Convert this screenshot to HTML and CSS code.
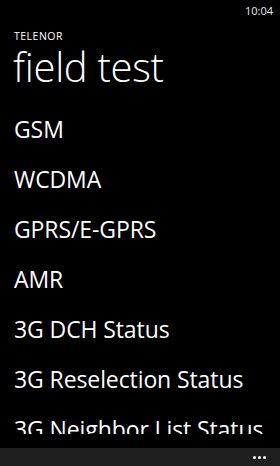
FILE: index.html
```html
<!DOCTYPE html>
<html lang="en">
<head>
  <meta charset="UTF-8" />
  <meta name="viewport" content="width=device-width, initial-scale=1.0"/>
  <title>field test</title>
  <link rel="stylesheet" href="styles.css">
</head>
<body>
  <div class="phone">
    <div class="status-bar">
      <span class="clock">10:04</span>
    </div>

    <header class="page-header">
      <p class="app-name">TELENOR</p>
      <h1 class="page-title">field test</h1>
    </header>

    <main class="list-wrap">
      <ul class="menu-list">
        <li>GSM</li>
        <li>WCDMA</li>
        <li>GPRS/E-GPRS</li>
        <li>AMR</li>
        <li>3G DCH Status</li>
        <li>3G Reselection Status</li>
        <li>3G Neighbor List Status</li>
      </ul>
    </main>

    <footer class="app-bar">
      <span class="more-dots"><i></i><i></i><i></i></span>
    </footer>
  </div>
</body>
</html>
```

FILE: styles.css
```css
* {
  box-sizing: border-box;
  margin: 0;
  padding: 0;
}

body {
  background: #000;
  color: #fff;
  font-family: 'Open Sans', 'Noto Sans', sans-serif;
}

.phone {
  width: 280px;
  height: 466px;
  display: flex;
  flex-direction: column;
  overflow: hidden;
}

.status-bar {
  height: 20px;
  display: flex;
  justify-content: flex-end;
  align-items: center;
  padding-right: 7px;
}

.clock {
  font-size: 11px;
  color: #e6e6e6;
}

.page-header {
  padding-left: 13px;
}

.app-name {
  font-size: 10.5px;
  line-height: 12px;
  letter-spacing: 0.5px;
  margin-top: 10px;
  padding-left: 1px;
}

.page-title {
  font-size: 40px;
  font-weight: 300;
  line-height: 48px;
  letter-spacing: -0.3px;
  margin-top: 1px;
}

.list-wrap {
  flex: 1;
  overflow: hidden;
  padding-left: 14px;
  margin-top: 13px;
  margin-bottom: 14px;
}

.menu-list {
  list-style: none;
}

.menu-list li {
  font-size: 23px;
  line-height: 50px;
  letter-spacing: -0.1px;
  white-space: nowrap;
}

.app-bar {
  height: 18px;
  background: #1f1f1f;
  display: flex;
  justify-content: flex-end;
  align-items: center;
  padding-right: 14px;
}

.more-dots {
  display: flex;
  gap: 2px;
}

.more-dots i {
  width: 3px;
  height: 3px;
  border-radius: 50%;
  background: #fff;
}
```
